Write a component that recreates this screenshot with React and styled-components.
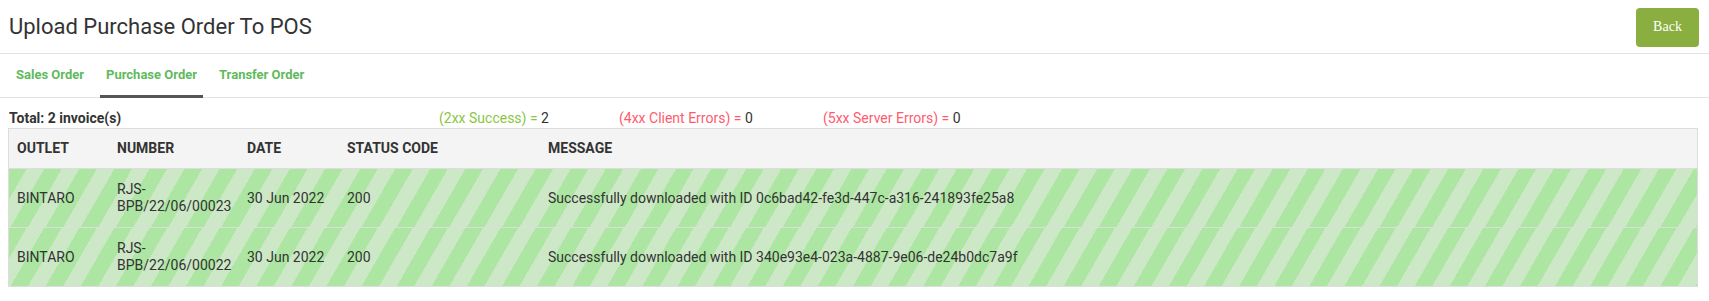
import React from "react"
import styled, { createGlobalStyle } from "styled-components"

const GlobalStyle = createGlobalStyle`
  body {
    margin: 0;
    background: #fff;
    font-family: Roboto, "Liberation Sans", sans-serif;
    color: #333;
  }
`

const Header = styled.div`
  height: 53px;
  display: flex;
  align-items: center;
  justify-content: space-between;
  padding: 0 10px 0 9px;
  border-bottom: 1px solid #e3e3e3;
`

const Title = styled.h1`
  margin: 0;
  font-size: 22px;
  font-weight: 400;
  color: #333;
`

const BackButton = styled.button`
  width: 63px;
  height: 39px;
  margin-top: 1px;
  border: none;
  border-radius: 4px;
  background-color: #8aae40;
  color: #fff;
  font-family: "Liberation Serif", serif;
  font-size: 14px;
  cursor: pointer;
`

const Tabs = styled.div`
  display: flex;
  gap: 10px;
  height: 43px;
  padding-left: 10px;
  border-bottom: 1px solid #e3e3e3;
`

const Tab = styled.div`
  display: flex;
  align-items: center;
  padding: 0 6px;
  margin-bottom: -1px;
  font-size: 13px;
  font-weight: 700;
  color: #5fba5d;
  border-bottom: 3px solid ${(p) => (p.$active ? "#555" : "transparent")};
`

const Content = styled.div`
  padding: 0 11px 0 8px;
`

const Summary = styled.div`
  display: grid;
  grid-template-columns: 430px 180px 204px auto;
  padding: 12px 0 1px 1px;
  font-size: 14px;
  line-height: 17px;
`

const Total = styled.div`
  font-weight: 700;
`

const Stat = styled.div`
  color: ${(p) => p.$color};
  span {
    color: #333;
  }
`

const Table = styled.div`
  border: 1px solid #ddd;
  border-bottom: none;
`

const Row = styled.div`
  display: grid;
  grid-template-columns: 100px 130px 100px 201px 1fr;
  align-items: center;
  padding: ${(p) => (p.$head ? "11px 0" : "12px 0")};
  min-height: ${(p) => (p.$head ? "17px" : "34px")};
  border-bottom: 1px solid #ddd;
  background: ${(p) =>
    p.$head
      ? "#f4f4f4"
      : "repeating-linear-gradient(120deg, #ade6a2 0 15.2px, #cce8c6 15.2px 30.4px)"};
  font-size: 14px;
  font-weight: ${(p) => (p.$head ? 700 : 400)};
  line-height: 17px;
  color: #333;
`

const Cell = styled.div`
  padding: 0 4px 0 8px;
`

const columns = ["OUTLET", "NUMBER", "DATE", "STATUS CODE", "MESSAGE"]

const rows = [
  {
    outlet: "BINTARO",
    number: "RJS-BPB/22/06/00023",
    date: "30 Jun 2022",
    status: "200",
    message: "Successfully downloaded with ID 0c6bad42-fe3d-447c-a316-241893fe25a8",
  },
  {
    outlet: "BINTARO",
    number: "RJS-BPB/22/06/00022",
    date: "30 Jun 2022",
    status: "200",
    message: "Successfully downloaded with ID 340e93e4-023a-4887-9e06-de24b0dc7a9f",
  },
]

export default function App() {
  return (
    <>
      <GlobalStyle />
      <Header>
        <Title>Upload Purchase Order To POS</Title>
        <BackButton>Back</BackButton>
      </Header>
      <Tabs>
        <Tab>Sales Order</Tab>
        <Tab $active>Purchase Order</Tab>
        <Tab>Transfer Order</Tab>
      </Tabs>
      <Content>
        <Summary>
          <Total>Total: 2 invoice(s)</Total>
          <Stat $color="#8cc63f">
            (2xx Success) = <span>2</span>
          </Stat>
          <Stat $color="#ff5b6e">
            (4xx Client Errors) = <span>0</span>
          </Stat>
          <Stat $color="#ff5b6e">
            (5xx Server Errors) = <span>0</span>
          </Stat>
        </Summary>
        <Table>
          <Row $head>
            {columns.map((c) => (
              <Cell key={c}>{c}</Cell>
            ))}
          </Row>
          {rows.map((r) => (
            <Row key={r.number}>
              <Cell>{r.outlet}</Cell>
              <Cell>{r.number}</Cell>
              <Cell>{r.date}</Cell>
              <Cell>{r.status}</Cell>
              <Cell>{r.message}</Cell>
            </Row>
          ))}
        </Table>
      </Content>
    </>
  )
}
